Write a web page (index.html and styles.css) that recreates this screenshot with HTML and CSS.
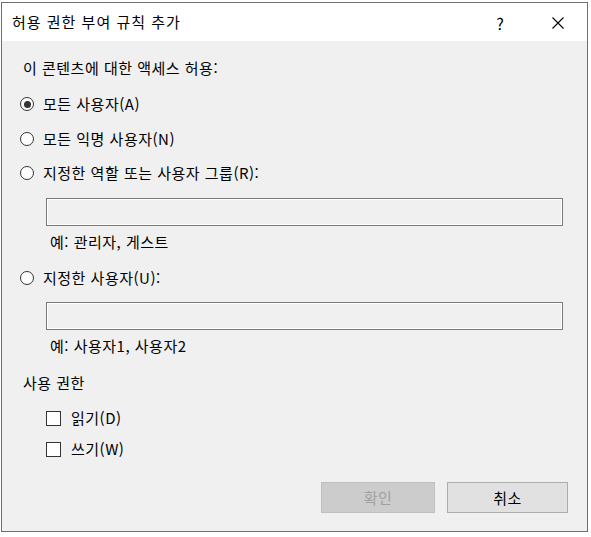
FILE: index.html
```html
<!DOCTYPE html>
<html lang="ko">
<head>
<meta charset="utf-8">
<title>허용 권한 부여 규칙 추가</title>
<link rel="stylesheet" href="styles.css">
</head>
<body>
<div class="dialog">
  <div class="titlebar">
    <span class="title">허용 권한 부여 규칙 추가</span>
    <span class="tbtn help">?</span>
    <span class="tbtn close">
      <svg width="12" height="12" viewBox="0 0 12 12"><path d="M0.5 0.5 L11.5 11.5 M11.5 0.5 L0.5 11.5" stroke="#000" stroke-width="1.1" fill="none"/></svg>
    </span>
  </div>
  <div class="content">
    <div class="row label">이 콘텐츠에 대한 액세스 허용:</div>
    <div class="row option m16"><span class="radio checked"></span><span>모든 사용자(A)</span></div>
    <div class="row option m15"><span class="radio"></span><span>모든 익명 사용자(N)</span></div>
    <div class="row option m14"><span class="radio"></span><span>지정한 역할 또는 사용자 그룹(R):</span></div>
    <div class="textbox m15"></div>
    <div class="row hint m6">예: 관리자, 게스트</div>
    <div class="row option m16"><span class="radio"></span><span>지정한 사용자(U):</span></div>
    <div class="textbox m14"></div>
    <div class="row hint m6">예: 사용자1, 사용자2</div>
    <div class="row label m17">사용 권한</div>
    <div class="row check m15"><span class="box"></span><span>읽기(D)</span></div>
    <div class="row check m11"><span class="box"></span><span>쓰기(W)</span></div>
    <div class="buttons">
      <span class="btn disabled">확인</span>
      <span class="btn">취소</span>
    </div>
  </div>
</div>
</body>
</html>
```

FILE: styles.css
```css
html, body {
  margin: 0;
  padding: 0;
  background: #ffffff;
}
body {
  font-family: "Noto Sans CJK KR", "Malgun Gothic", "Noto Sans", sans-serif;
  color: #000;
}
.dialog {
  margin: 2px 0 0 1px;
  width: 587px;
  height: 530px;
  box-sizing: border-box;
  border: 1px solid #6f6f6f;
  background: #f0f0f0;
  display: flex;
  flex-direction: column;
}
.titlebar {
  height: 38px;
  background: #ffffff;
  display: flex;
  align-items: center;
  flex: none;
}
.title {
  flex: 1;
  padding-left: 10px;
  font-size: 15px;
  line-height: 20px;
  letter-spacing: 1px;
}
.tbtn {
  width: 58px;
  height: 38px;
  display: flex;
  align-items: center;
  justify-content: center;
  font-size: 16px;
}
.help {
  padding-top: 2px;
  box-sizing: border-box;
}
.close svg {
  display: block;
  margin-top: 2px;
}
.content {
  flex: 1;
  padding-top: 17px;
  display: flex;
  flex-direction: column;
}
.row {
  height: 20px;
  line-height: 20px;
  font-size: 15px;
  letter-spacing: 0.5px;
  display: flex;
  align-items: center;
  white-space: nowrap;
}
.label {
  padding-left: 21px;
}
.option {
  padding-left: 18px;
}
.radio {
  width: 14px;
  height: 14px;
  box-sizing: border-box;
  border: 1px solid #333;
  border-radius: 50%;
  background: #fff;
  margin-right: 9px;
  display: flex;
  align-items: center;
  justify-content: center;
  flex: none;
}
.radio.checked::after {
  content: "";
  width: 7px;
  height: 7px;
  border-radius: 50%;
  background: #333;
}
.textbox {
  margin-left: 44px;
  width: 517px;
  height: 28px;
  box-sizing: border-box;
  border: 1px solid #7a7a7a;
  background: #f0f0f0;
  box-shadow: inset 1px 1px 0 #ffffff, inset -1px -1px 0 #ffffff;
  flex: none;
}
.hint {
  padding-left: 48px;
}
.check {
  padding-left: 44px;
}
.box {
  width: 15px;
  height: 15px;
  box-sizing: border-box;
  border: 1px solid #333;
  background: #fff;
  margin-right: 10px;
  flex: none;
}
.buttons {
  margin-top: 23px;
  display: flex;
  justify-content: flex-end;
  gap: 12px;
  padding-right: 19px;
}
.btn {
  width: 121px;
  height: 31px;
  box-sizing: border-box;
  border: 1px solid #adadad;
  background: #e1e1e1;
  font-size: 15px;
  letter-spacing: 0.5px;
  display: flex;
  align-items: center;
  justify-content: center;
}
.btn.disabled {
  width: 114px;
  border-color: #bfbfbf;
  background: #cccccc;
  color: #a0a0a0;
}
.m6 { margin-top: 6px; }
.m11 { margin-top: 11px; }
.m14 { margin-top: 14px; }
.m15 { margin-top: 15px; }
.m16 { margin-top: 16px; }
.m17 { margin-top: 17px; }
```
